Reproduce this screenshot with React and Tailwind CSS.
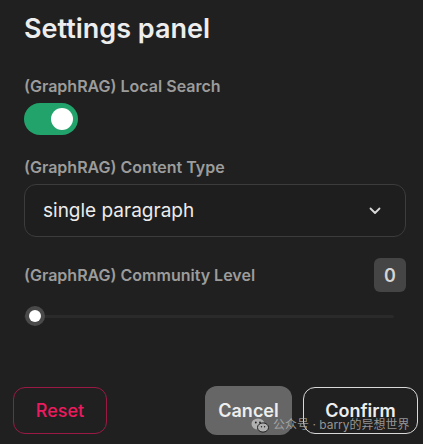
export default function App() {
  const font = { fontFamily: "Inter, 'Noto Sans CJK SC', sans-serif" };
  return (
    <div
      className="relative w-[423px] h-[444px] overflow-hidden bg-[#202020] text-[#ececec]"
      style={font}
    >
      <div className="flex flex-col pl-6 pr-[17px]">
        <h1 className="mt-[13px] h-8 text-[27px] font-semibold leading-8 text-[#ededed]">
          Settings panel
        </h1>

        <div className="mt-[31px] h-5 text-[16px] font-semibold leading-5 text-[#9c9c9c]">
          (GraphRAG) Local Search
        </div>
        <div className="mt-[7px] flex h-8 w-[54px] items-center rounded-full bg-[#21a36b] px-[5px] justify-end">
          <div className="h-[22px] w-[22px] rounded-full bg-white" />
        </div>

        <div className="mt-[22px] h-5 text-[16px] font-semibold leading-5 text-[#9c9c9c]">
          (GraphRAG) Content Type
        </div>
        <div className="mt-[7px] flex h-[53px] items-center justify-between rounded-xl border border-[#3c3c3c] bg-[#1e1e1e] pl-[18px] pr-[24px]">
          <span className="text-[19px] leading-6 text-[#ececec]">single paragraph</span>
          <svg width="12" height="8" viewBox="0 0 12 8" fill="none">
            <polyline points="1.5,1.5 6,6 10.5,1.5" stroke="#d8d8d8" strokeWidth="1.8" strokeLinecap="round" strokeLinejoin="round" />
          </svg>
        </div>

        <div className="mt-[21px] flex h-[34px] items-center justify-between">
          <span className="text-[16px] font-semibold leading-5 text-[#9c9c9c]">
            (GraphRAG) Community Level
          </span>
          <span className="flex h-[34px] w-[32px] items-center justify-center rounded-md bg-[#454545] text-[18px] font-semibold text-[#d4d4d4]">
            0
          </span>
        </div>

        <div className="relative mt-[14px] flex h-5 items-center pr-[12px]">
          <div className="h-[3px] w-full rounded-full bg-[#2a2a2a]" />
          <div className="absolute left-px top-0 flex h-5 w-5 items-center justify-center rounded-full bg-[#4a4a4a]">
            <div className="h-3 w-3 rounded-full bg-white" />
          </div>
        </div>
      </div>

      <div className="mt-[60px] flex items-center justify-between pl-[13px] pr-[5px]">
        <button className="h-[47px] w-[94px] rounded-xl border border-[#9b1a44] text-[18px] font-medium text-[#ec1a5e]">
          Reset
        </button>
        <div className="flex items-center gap-[11px]">
          <button className="h-[49px] w-[87px] rounded-xl bg-[#666666] text-[18px] font-semibold text-[#eeeeee]">
            Cancel
          </button>
          <button className="h-[47px] w-[115px] rounded-xl border border-[#d8d8d8] text-[18px] font-semibold text-[#eeeeee]">
            Confirm
          </button>
        </div>
      </div>

      <div className="absolute left-[251px] top-[417px] flex items-center gap-[4px] text-[12px] leading-4 text-[#b4b4b4]/80">
        <svg width="18" height="15" viewBox="0 0 18 15">
          <ellipse cx="7" cy="6" rx="6.5" ry="5.5" fill="#b0b0b0" />
          <ellipse cx="12" cy="9.5" rx="5.5" ry="4.6" fill="#b0b0b0" stroke="#202020" strokeWidth="1" />
          <circle cx="4.8" cy="4.5" r="0.9" fill="#202020" />
          <circle cx="9" cy="4.5" r="0.9" fill="#202020" />
          <circle cx="10.5" cy="8.8" r="0.7" fill="#202020" />
          <circle cx="13.6" cy="8.8" r="0.7" fill="#202020" />
        </svg>
        <span>公众号 · barry的异想世界</span>
      </div>
    </div>
  );
}
